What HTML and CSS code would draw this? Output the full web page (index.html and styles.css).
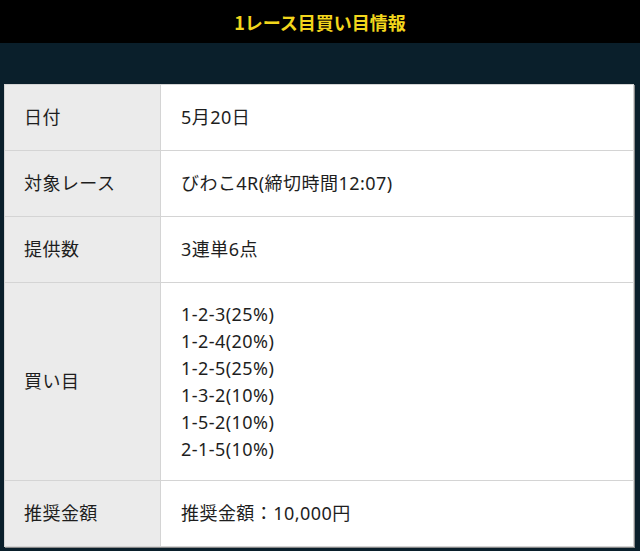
FILE: index.html
```html
<!DOCTYPE html>
<html lang="ja">
<head>
<meta charset="utf-8">
<link rel="stylesheet" href="styles.css">
</head>
<body>
<header class="head"><h1 class="title">1レース目買い目情報</h1></header>
<main class="wrap">
<table class="info">
<tr><th>日付</th><td>5月20日</td></tr>
<tr><th>対象レース</th><td>びわこ4R(締切時間12:07)</td></tr>
<tr><th>提供数</th><td>3連単6点</td></tr>
<tr class="multi"><th>買い目</th><td>1-2-3(25%)<br>1-2-4(20%)<br>1-2-5(25%)<br>1-3-2(10%)<br>1-5-2(10%)<br>2-1-5(10%)</td></tr>
<tr><th>推奨金額</th><td>推奨金額：10,000円</td></tr>
</table>
</main>
</body>
</html>
```
FILE: styles.css
```css
html, body { margin: 0; padding: 0; }
body {
  background: #0a1f2b;
  font-family: "Noto Sans", "Noto Sans CJK JP", sans-serif;
  height: 551px;
  overflow: hidden;
}
.head {
  background: #000;
  height: 43px;
  display: flex;
  align-items: center;
  justify-content: center;
}
.title {
  margin: 0;
  color: #f2d61c;
  font-family: "Noto Sans CJK JP", sans-serif;
  font-size: 18px;
  font-weight: bold;
  line-height: 1;
}
.wrap {
  padding: 41px 6px 0 4px;
}
.info {
  width: 630px;
  border-collapse: collapse;
  background: #fff;
  border: 1px solid #bdbdbd;
  box-shadow: 1px 1px 0 #888;
}
.info th, .info td {
  border: 1px solid #d4d4d4;
  font-size: 18px;
  line-height: 27px;
  letter-spacing: 0.45px;
  color: #1e1e1e;
  text-align: left;
  font-weight: normal;
  padding: 19px 20px 19px;
}
.info th {
  width: 116px;
  background: #ebebeb;
  padding-left: 19px;
}
.info td {
  padding-left: 20px;
}
.info .multi th, .info .multi td {
  padding-top: 17.5px;
  padding-bottom: 17px;
}
```
